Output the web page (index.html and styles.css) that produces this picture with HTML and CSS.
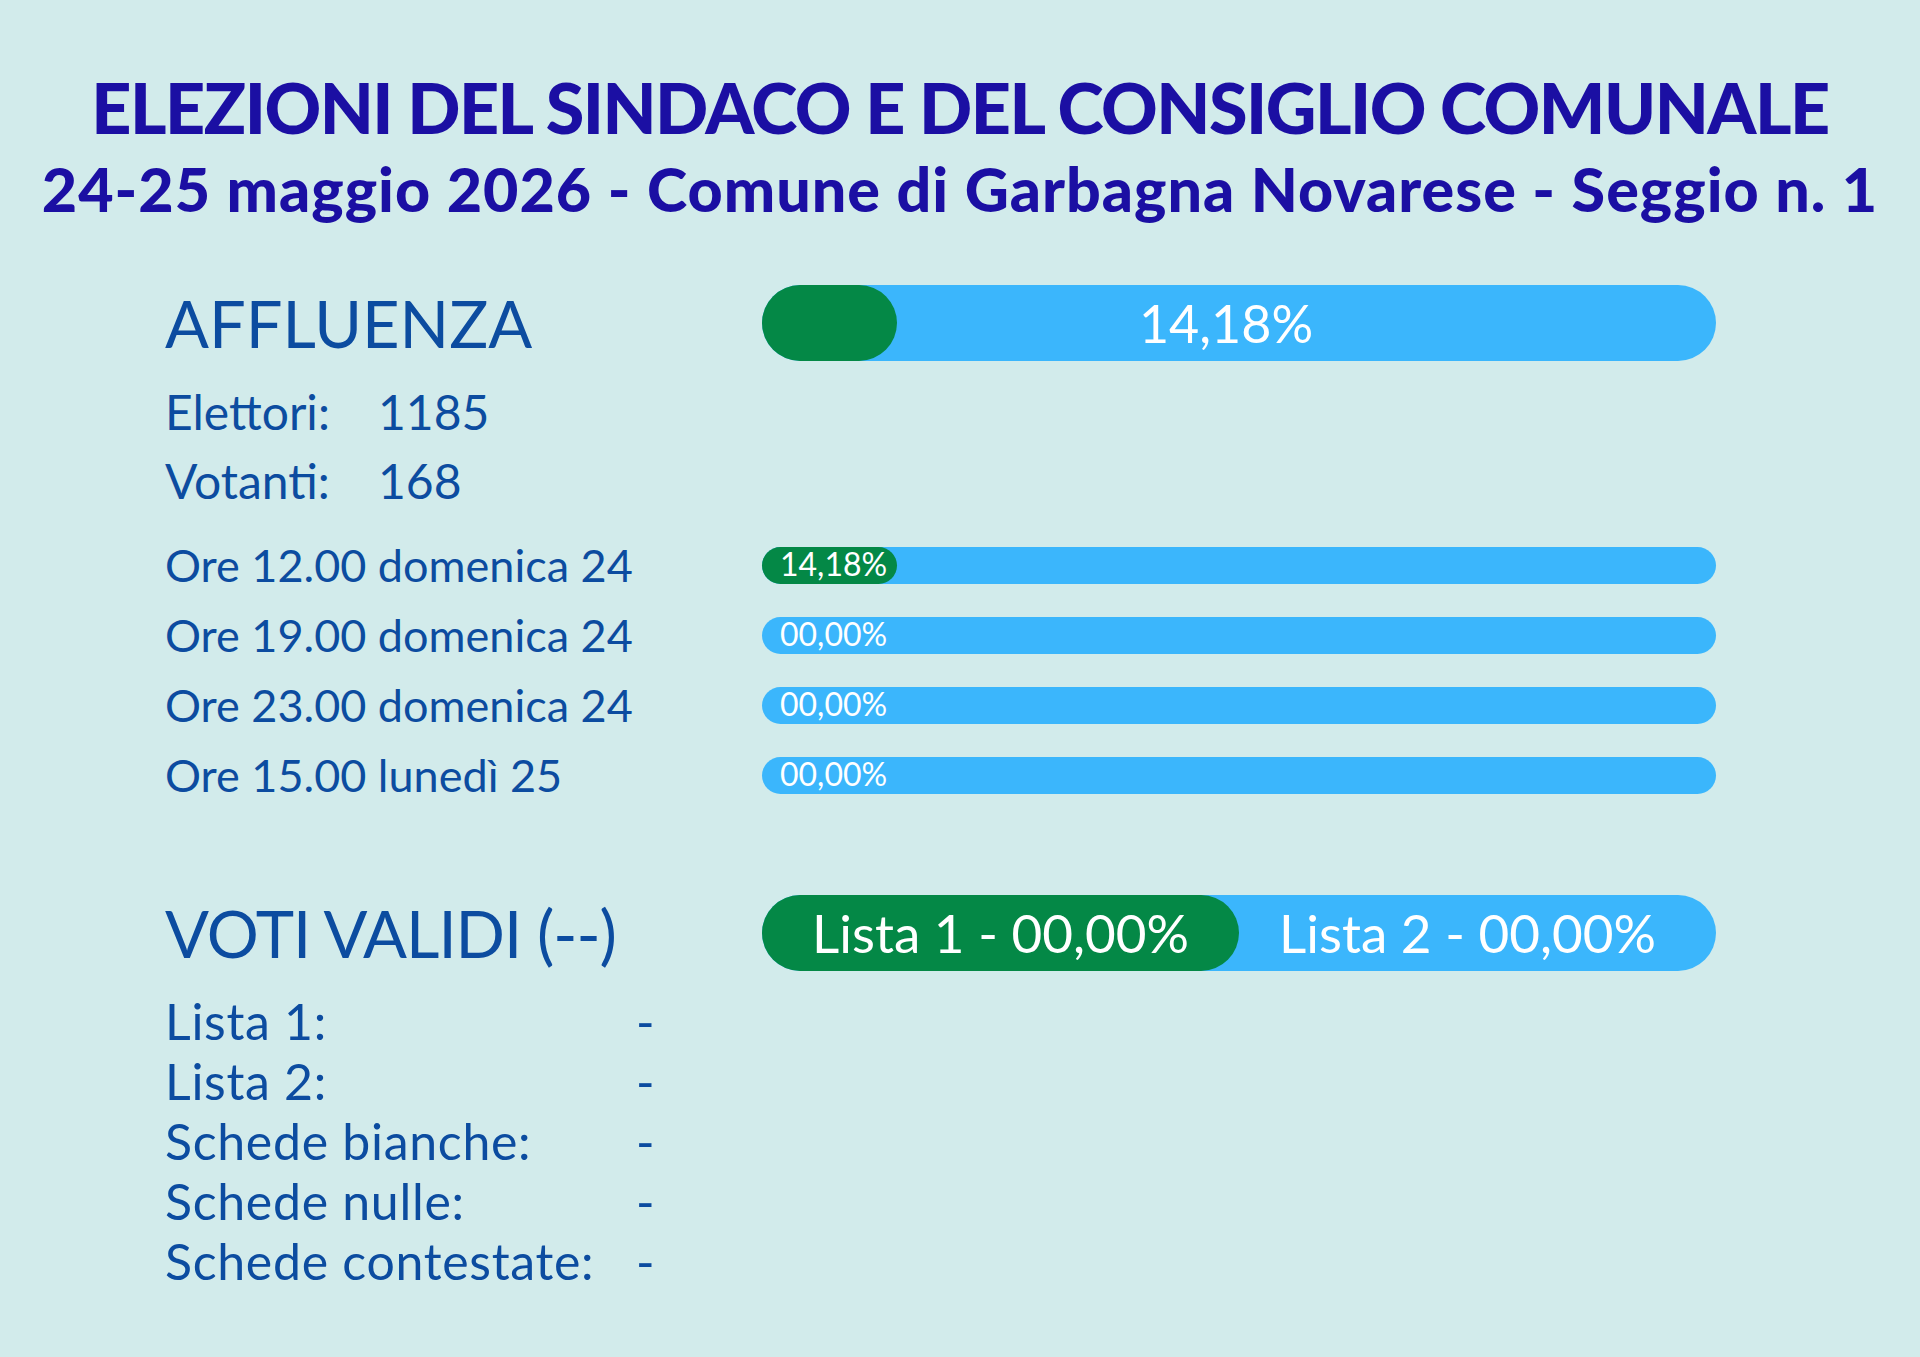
FILE: index.html
```html
<!DOCTYPE html>
<html lang="it">
<head>
<meta charset="utf-8">
<title>Elezioni - Seggio n. 1</title>
<link rel="stylesheet" href="styles.css">
</head>
<body>
<header class="head">
  <h1 class="title">ELEZIONI DEL SINDACO E DEL CONSIGLIO COMUNALE</h1>
  <h2 class="subtitle">24-25 maggio 2026 - Comune di Garbagna Novarese - Seggio n. 1</h2>
</header>
<main class="board">
  <section class="block turnout">
    <div class="row row-head">
      <div class="label-lg">AFFLUENZA</div>
      <div class="bar bar-lg">
        <div class="fill" style="width:14.18%"></div>
        <span class="bar-text text-lg">14,18%</span>
      </div>
    </div>
    <div class="stats">
      <div class="stat"><span class="k">Elettori:</span><span class="v">1185</span></div>
      <div class="stat"><span class="k">Votanti:</span><span class="v">168</span></div>
    </div>
    <div class="times">
      <div class="row row-time">
        <div class="label-md">Ore 12.00 domenica 24</div>
        <div class="bar bar-sm">
          <div class="fill" style="width:14.18%"></div>
          <span class="bar-text text-sm">14,18%</span>
        </div>
      </div>
      <div class="row row-time">
        <div class="label-md">Ore 19.00 domenica 24</div>
        <div class="bar bar-sm">
          <div class="fill" style="width:0%"></div>
          <span class="bar-text text-sm">00,00%</span>
        </div>
      </div>
      <div class="row row-time">
        <div class="label-md">Ore 23.00 domenica 24</div>
        <div class="bar bar-sm">
          <div class="fill" style="width:0%"></div>
          <span class="bar-text text-sm">00,00%</span>
        </div>
      </div>
      <div class="row row-time">
        <div class="label-md">Ore 15.00 lunedì 25</div>
        <div class="bar bar-sm">
          <div class="fill" style="width:0%"></div>
          <span class="bar-text text-sm">00,00%</span>
        </div>
      </div>
    </div>
  </section>
  <section class="block votes">
    <div class="row row-head">
      <div class="label-lg">VOTI VALIDI (--)</div>
      <div class="bar bar-lg split">
        <div class="half half-green"><span class="text-md">Lista 1 - 00,00%</span></div>
        <div class="half half-blue"><span class="text-md">Lista 2 - 00,00%</span></div>
      </div>
    </div>
    <div class="list">
      <div class="item"><span class="k">Lista 1:</span><span class="v">-</span></div>
      <div class="item"><span class="k">Lista 2:</span><span class="v">-</span></div>
      <div class="item"><span class="k">Schede bianche:</span><span class="v">-</span></div>
      <div class="item"><span class="k">Schede nulle:</span><span class="v">-</span></div>
      <div class="item"><span class="k">Schede contestate:</span><span class="v">-</span></div>
    </div>
  </section>
</main>
</body>
</html>
```
FILE: styles.css
```css
html, body {
  margin: 0;
  padding: 0;
}
body {
  width: 1920px;
  height: 1357px;
  background: #d2ebeb;
  font-family: Lato, "Liberation Sans", sans-serif;
  color: #0c4ca0;
  overflow: hidden;
}
.head {
  padding-top: 72px;
  text-align: center;
  color: #1b0fa3;
}
.title {
  margin: 0;
  font-size: 70px;
  line-height: 70px;
  font-weight: 900;
  letter-spacing: -1.5px;
}
.subtitle {
  margin: 16px 0 0;
  font-size: 61px;
  line-height: 61px;
  font-weight: 900;
  letter-spacing: 1px;
}
.board {
  margin-top: 66px;
  padding-left: 165px;
}
.row {
  display: grid;
  grid-template-columns: 597px 954px;
  align-items: center;
}
.row-head {
  height: 76px;
}
.label-lg {
  font-size: 65px;
  line-height: 76px;
  font-weight: 400;
  white-space: nowrap;
}
.votes .label-lg {
  letter-spacing: -1px;
}
.stats {
  margin-top: 16px;
}
.stat {
  display: flex;
  height: 69px;
  line-height: 69px;
  font-size: 48px;
}
.stat .k {
  width: 213px;
}
.times {
  margin-top: 15px;
}
.row-time {
  height: 70px;
}
.label-md {
  font-size: 45px;
  line-height: 70px;
  white-space: nowrap;
}
.bar {
  display: grid;
  background: #3bb6fc;
}
.bar > .fill,
.bar > .bar-text {
  grid-area: 1 / 1;
}
.fill {
  height: 100%;
  background: #048846;
  justify-self: start;
}
.bar-lg {
  height: 76px;
  border-radius: 38px;
}
.bar-lg .fill {
  border-radius: 38px;
}
.bar-sm {
  height: 37px;
  border-radius: 18.5px;
}
.bar-sm .fill {
  border-radius: 18.5px;
}
.bar-text {
  color: #ffffff;
  align-self: center;
  font-weight: 400;
  white-space: nowrap;
}
.text-lg {
  font-size: 52px;
  line-height: 76px;
  justify-self: center;
  margin-left: -26px;
}
.text-sm {
  font-size: 32px;
  line-height: 34px;
  justify-self: start;
  align-self: start;
  padding-left: 18px;
}
.split {
  grid-template-columns: 50% 50%;
}
.half {
  display: flex;
  align-items: center;
  justify-content: center;
  color: #ffffff;
  height: 100%;
}
.half-green {
  background: #048846;
  border-radius: 38px;
}
.text-md {
  font-size: 53px;
  line-height: 76px;
  white-space: nowrap;
}
.half-blue .text-md {
  margin-right: 20px;
}
.votes .row-head {
  margin-top: 85px;
}
.list {
  margin-top: 20px;
}
.item {
  display: flex;
  height: 60px;
  line-height: 60px;
  font-size: 50px;
  letter-spacing: 0.7px;
}
.item .k {
  width: 471px;
}
```
